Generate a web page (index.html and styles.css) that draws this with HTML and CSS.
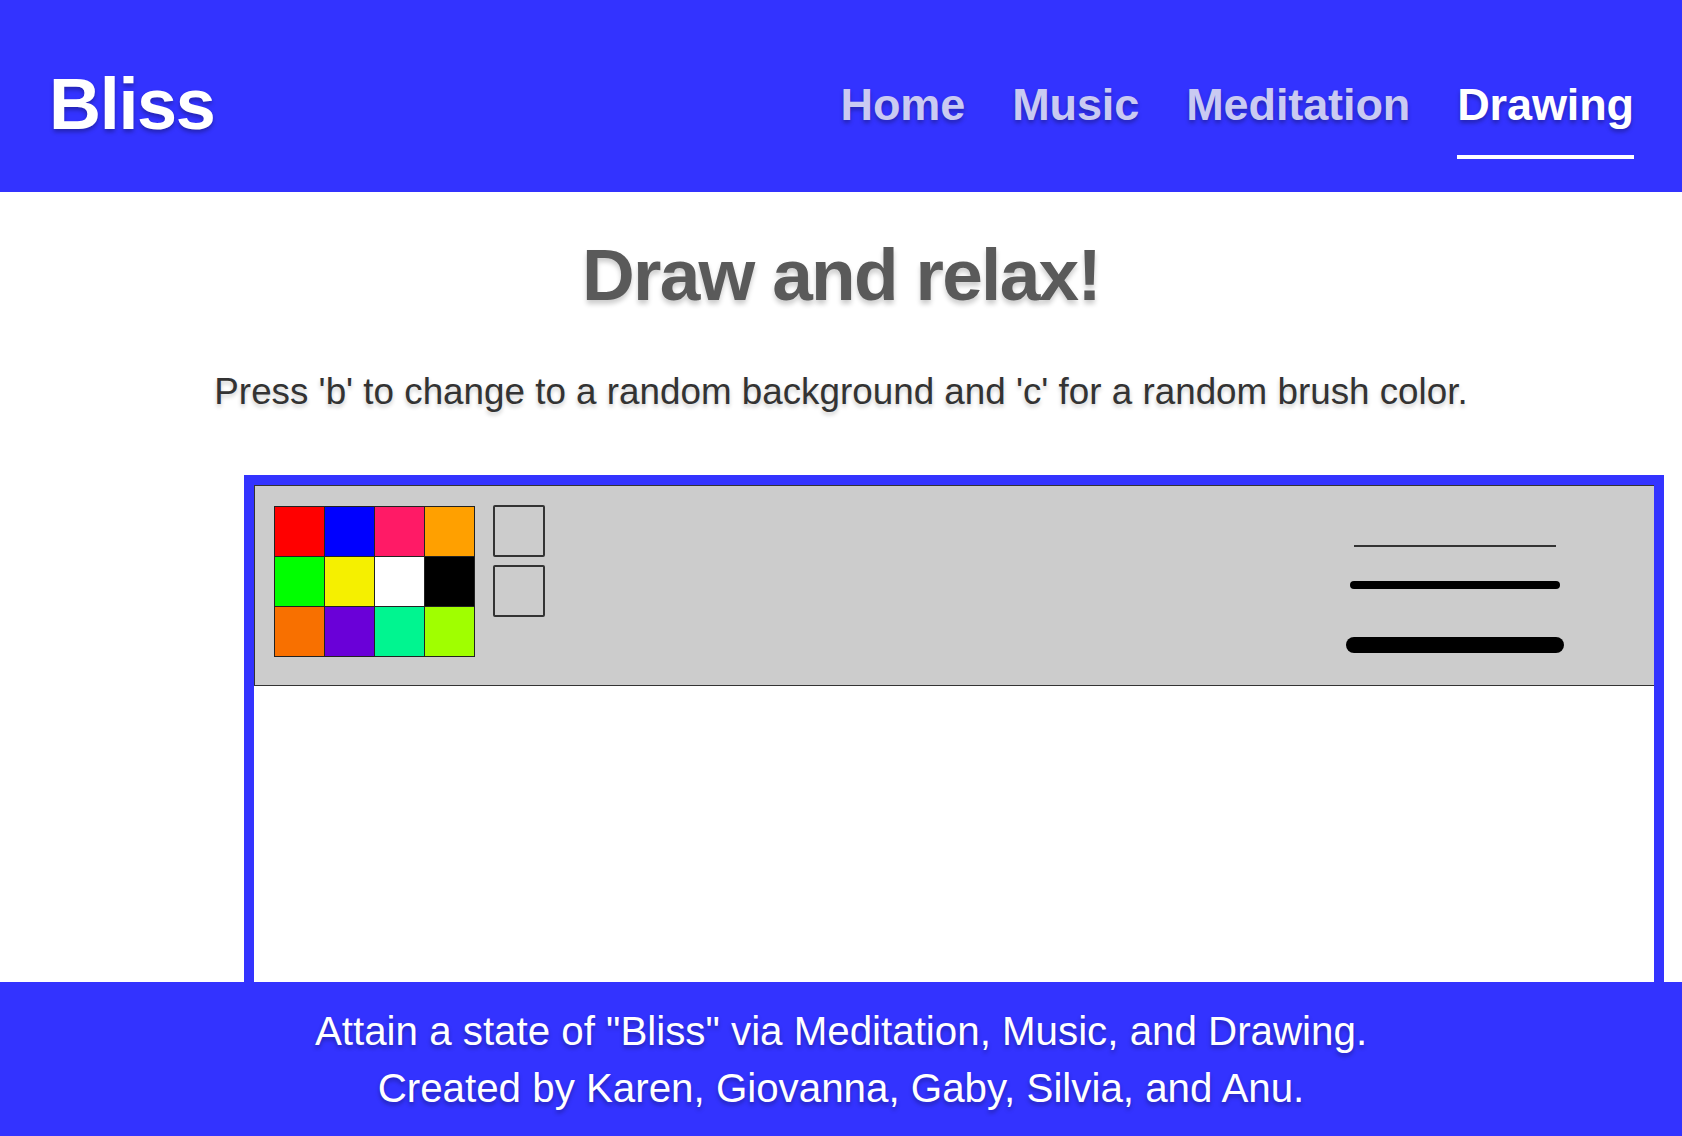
FILE: index.html
```html
<!DOCTYPE html>
<html lang="en">
<head>
  <meta charset="UTF-8">
  <meta name="viewport" content="width=device-width, initial-scale=1.0">
  <title>Bliss - Drawing</title>
  <link rel="stylesheet" href="styles.css">
</head>
<body>
  <header class="topbar">
    <h1 class="logo">Bliss</h1>
    <nav class="menu">
      <a href="#">Home</a>
      <a href="#">Music</a>
      <a href="#">Meditation</a>
      <a href="#" class="active">Drawing</a>
    </nav>
  </header>

  <h2 class="title">Draw and relax!</h2>
  <p class="hint">Press 'b' to change to a random background and 'c' for a random brush color.</p>

  <div class="frame">
    <div class="toolbar">
      <div class="palette">
        <span class="swatch red"></span>
        <span class="swatch blue"></span>
        <span class="swatch pink"></span>
        <span class="swatch orange"></span>
        <span class="swatch green"></span>
        <span class="swatch yellow"></span>
        <span class="swatch white"></span>
        <span class="swatch black"></span>
        <span class="swatch rust"></span>
        <span class="swatch purple"></span>
        <span class="swatch teal"></span>
        <span class="swatch lime"></span>
      </div>
      <div class="current">
        <span class="box"></span>
        <span class="box"></span>
      </div>
      <!-- brush sizes -->
      <svg class="brushes" width="220" height="160" viewBox="0 0 220 160">
        <line x1="9" y1="40" x2="211" y2="40" stroke="#333" stroke-width="2"/>
        <line x1="9" y1="79" x2="211" y2="79" stroke="#000" stroke-width="8" stroke-linecap="round"/>
        <line x1="9" y1="139" x2="211" y2="139" stroke="#000" stroke-width="16" stroke-linecap="round"/>
      </svg>
    </div>
    <div class="canvas"></div>
  </div>

  <footer class="footer">
    <p>Attain a state of "Bliss" via Meditation, Music, and Drawing.</p>
    <p>Created by Karen, Giovanna, Gaby, Silvia, and Anu.</p>
  </footer>
</body>
</html>
```

FILE: styles.css
```css
body {
  margin: 0;
  font-family: "Liberation Sans", Arial, Helvetica, sans-serif;
  background-color: #fff;
}

.topbar {
  display: flex;
  justify-content: space-between;
  align-items: flex-start;
  height: 192px;
  box-sizing: border-box;
  padding: 68px 48px 0;
  background-color: #3333ff;
}

.logo {
  margin: 0 0 0 1px;
  font-size: 72px;
  line-height: 1;
  font-weight: bold;
  letter-spacing: -1.3px;
  color: #fff;
  text-shadow: 0 3px 4px rgba(0, 0, 0, 0.3);
}

.menu {
  display: flex;
  gap: 47px;
  padding-top: 14px;
}

.menu a {
  font-size: 45px;
  line-height: 1;
  font-weight: bold;
  letter-spacing: -0.1px;
  color: #cacaf2;
  text-decoration: none;
  padding-bottom: 28px;
  border-bottom: 4px solid transparent;
  text-shadow: 0 3px 4px rgba(0, 0, 0, 0.3);
}

.menu a.active {
  color: #fff;
  border-bottom-color: #fff;
}

.title {
  margin: 46px 0 0;
  font-size: 73px;
  line-height: 1;
  font-weight: bold;
  letter-spacing: -1.7px;
  text-align: center;
  color: #5a5a5a;
  text-shadow: 0 4px 5px rgba(0, 0, 0, 0.2);
}

.hint {
  margin: 63px 0 0;
  font-size: 36.8px;
  line-height: 1;
  text-align: center;
  color: #333;
  text-shadow: 0 3px 4px rgba(0, 0, 0, 0.2);
}

.frame {
  width: 1420px;
  box-sizing: border-box;
  margin: 64px 0 0 244px;
  border: 10px solid #3333ff;
}

.toolbar {
  display: flex;
  align-items: flex-start;
  height: 201px;
  box-sizing: border-box;
  padding: 20px 0 0 19px;
  background-color: #ccc;
  border: 1px solid #333;
  border-right: none;
}

.palette {
  display: grid;
  grid-template-columns: repeat(4, 49px);
  grid-auto-rows: 49px;
  gap: 1px;
  background-color: #222;
  border: 1px solid #222;
}

.swatch.red { background-color: #ff0000; }
.swatch.blue { background-color: #0000ff; }
.swatch.pink { background-color: #ff1a66; }
.swatch.orange { background-color: #ffa000; }
.swatch.green { background-color: #00ff00; }
.swatch.yellow { background-color: #f5f000; }
.swatch.white { background-color: #fff; }
.swatch.black { background-color: #000; }
.swatch.rust { background-color: #f87000; }
.swatch.purple { background-color: #6a00d8; }
.swatch.teal { background-color: #00f590; }
.swatch.lime { background-color: #a0ff00; }

.current {
  display: flex;
  flex-direction: column;
  gap: 8px;
  margin: -1px 0 0 18px;
}

.current .box {
  width: 52px;
  height: 52px;
  box-sizing: border-box;
  border: 2px solid #333;
  border-radius: 2px;
}

.brushes {
  display: block;
  margin-left: auto;
  margin-right: 89px;
}

.canvas {
  height: 440px;
  background-color: #fff;
}

.footer {
  position: fixed;
  left: 0;
  right: 0;
  bottom: 0;
  height: 154px;
  box-sizing: border-box;
  padding-top: 22px;
  background-color: #3333ff;
  color: #fff;
  text-align: center;
  font-size: 40.3px;
  line-height: 56.5px;
  text-shadow: 0 3px 4px rgba(0, 0, 0, 0.3);
}

.footer p {
  margin: 0;
}
```
